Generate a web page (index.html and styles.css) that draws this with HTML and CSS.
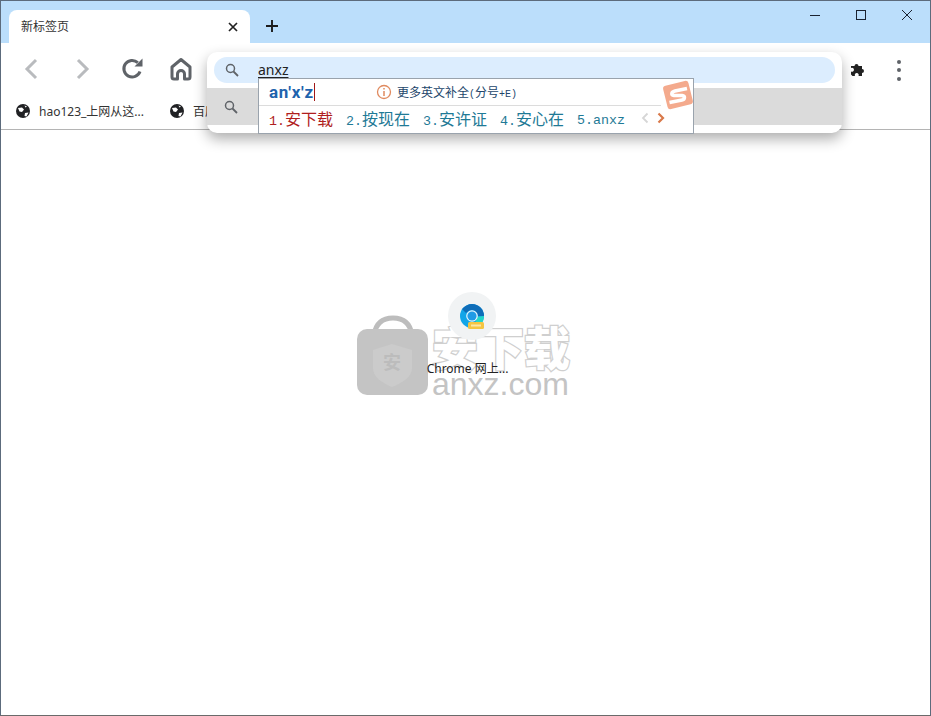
FILE: index.html
```html
<!DOCTYPE html>
<html lang="zh">
<head>
<meta charset="utf-8">
<title>新标签页</title>
<link rel="stylesheet" href="styles.css">
</head>
<body>
<div class="window">
  <header class="titlebar">
    <div class="tab">
      <span class="tab-title">新标签页</span>
      <svg class="tab-close" width="10" height="10" viewBox="0 0 10 10"><path d="M1 1L9 9M9 1L1 9" stroke="#222" stroke-width="1.7" fill="none"/></svg>
    </div>
    <svg class="new-tab" width="14" height="14" viewBox="0 0 14 14"><path d="M7 1V13M1 7H13" stroke="#1c1c1c" stroke-width="1.9" fill="none"/></svg>
    <div class="win-controls">
      <svg width="12" height="12" viewBox="0 0 12 12"><path d="M1 6.5H11" stroke="#1a2230" stroke-width="1" fill="none"/></svg>
      <svg width="12" height="12" viewBox="0 0 12 12"><rect x="1.5" y="1.5" width="9" height="9" stroke="#1a2230" stroke-width="1" fill="none"/></svg>
      <svg width="12" height="12" viewBox="0 0 12 12"><path d="M1 1L11 11M11 1L1 11" stroke="#1a2230" stroke-width="1" fill="none"/></svg>
    </div>
  </header>
  <nav class="toolbar">
    <svg class="back" width="16" height="22" viewBox="0 0 16 22"><path d="M13 2L4 11L13 20" stroke="#b9bbbe" stroke-width="3" fill="none"/></svg>
    <svg class="forward" width="16" height="22" viewBox="0 0 16 22"><path d="M3 2L12 11L3 20" stroke="#b9bbbe" stroke-width="3" fill="none"/></svg>
    <svg class="reload" width="24" height="24" viewBox="0 0 24 24"><path d="M20 14.500A8.300 8.300 0 1 1 17.800 5.600" stroke="#5f6368" stroke-width="3" fill="none"/><path d="M14.500 9.500H22.500V1.500Z" fill="#5f6368"/></svg>
    <svg class="home" width="22" height="24" viewBox="0 0 22 24"><path d="M11 2.500L20 10V20A2 2 0 0 1 18 22H14.500V17A3.500 3.500 0 0 0 7.500 17V22H4A2 2 0 0 1 2 20V10Z" stroke="#5f6368" stroke-width="3" fill="none" stroke-linejoin="round"/></svg>
    <div class="toolbar-spacer"></div>
    <svg class="puzzle" width="16" height="16" viewBox="0 0 16 16"><path d="M1 5H4.500A2 2 0 1 1 8.500 5H12V8A2 2 0 1 1 12 12V15H8.500A2 2 0 1 0 5 15H2.500L1 13.500V10.500A2 2 0 1 0 1 7Z" fill="#222"/></svg>
    <div class="kebab"><i></i><i></i><i></i></div>
  </nav>
  <div class="bookmarks">
    <div class="bookmark hao">
      <svg width="14" height="14" viewBox="0 0 14 14"><circle cx="7" cy="7" r="7" fill="#202124"/><path d="M2 4L6 3.500L8 5.500L6 8L3.500 7.500ZM9 9L12.500 8.500L10.500 12.500L8.500 12Z M8.500 1.500L11 2.500L9.500 3.500Z" fill="#fff"/></svg>
      <span>hao123_上网从这...</span>
    </div>
    <div class="bookmark">
      <svg width="14" height="14" viewBox="0 0 14 14"><circle cx="7" cy="7" r="7" fill="#202124"/><path d="M2 4L6 3.500L8 5.500L6 8L3.500 7.500ZM9 9L12.500 8.500L10.500 12.500L8.500 12Z M8.500 1.500L11 2.500L9.500 3.500Z" fill="#fff"/></svg>
      <span>百度</span>
    </div>
  </div>
  <main class="content">
    <div class="watermark">
      <svg class="wm-bag" width="71" height="81" viewBox="0 0 71 81">
        <path d="M17 20C19 7 27 3 36 3C45 3 53 7 55 20" stroke="#bdbdbd" stroke-width="5" fill="none"/>
        <rect x="0" y="14" width="71" height="66" rx="10" fill="#c4c4c4"/>
        <path d="M35 29L55 35V53C55 62 45 68 35 72C25 68 16 62 16 53V35Z" fill="#cbcbcb"/>
      </svg>
      <span class="wm-bag-char">安</span>
      <div class="wm-text">
        <span class="wm-cn">安下载</span>
        <span class="wm-en">anxz.com</span>
      </div>
    </div>
    <div class="shortcut">
      <div class="shortcut-circle">
        <svg width="26" height="28" viewBox="0 0 26 28">
          <circle cx="13" cy="12" r="12" fill="#12a5e8"/>
          <path d="M13 0A12 12 0 0 1 25 12L19 12C18 8 16 6 13 6C11 6 9 7 7 9L3 5C6 2 9 0 13 0Z" fill="#0f6db8"/>
          <path d="M25 12A12 12 0 0 1 15 24L18 13Z" fill="#22d8c8"/>
          <circle cx="13" cy="12" r="5.800" fill="#eaf7fd"/>
          <circle cx="13" cy="12" r="4.600" fill="#1f9be6"/>
          <rect x="9" y="18" width="16" height="7" rx="1.500" fill="#f5c542"/>
          <rect x="12" y="20.500" width="10" height="2" fill="#fbe7a6"/>
        </svg>
      </div>
      <span class="shortcut-label">Chrome 网上...</span>
    </div>
  </main>
  <div class="omnibox-popup">
    <div class="omni-row">
      <div class="omni-input">
        <svg width="14" height="14" viewBox="0 0 14 14"><circle cx="5.500" cy="5.500" r="4" stroke="#5f6368" stroke-width="1.500" fill="none"/><path d="M8.500 8.500L13 13" stroke="#5f6368" stroke-width="1.800"/></svg>
        <span class="omni-text">anxz</span>
      </div>
    </div>
    <div class="omni-suggest">
      <svg width="14" height="14" viewBox="0 0 14 14"><circle cx="5.500" cy="5.500" r="4" stroke="#5f6368" stroke-width="1.500" fill="none"/><path d="M8.500 8.500L13 13" stroke="#5f6368" stroke-width="1.800"/></svg>
    </div>
  </div>
  <div class="ime">
    <div class="ime-top">
      <span class="ime-pinyin">an'x'z</span><span class="ime-caret"></span>
      <svg class="ime-info" width="16" height="16" viewBox="0 0 16 16"><circle cx="8" cy="8" r="6.500" stroke="#e08a5f" stroke-width="1.300" fill="none"/><path d="M8 4V5.500M8 7V12" stroke="#e08a5f" stroke-width="1.500"/></svg>
      <span class="ime-hint">更多英文补全<span class="half">(</span>分号<span class="half">+E)</span></span>
    </div>
    <div class="ime-bottom">
      <span class="cand first"><span class="num">1.</span>安下载</span>
      <span class="cand"><span class="num">2.</span>按现在</span>
      <span class="cand"><span class="num">3.</span>安许证</span>
      <span class="cand"><span class="num">4.</span>安心在</span>
      <span class="cand"><span class="num">5.anxz</span></span>
      <svg class="ime-prev" width="8" height="12" viewBox="0 0 8 12"><path d="M6.500 1.500L2 6L6.500 10.500" stroke="#d6d6d6" stroke-width="1.800" fill="none"/></svg>
      <svg class="ime-next" width="8" height="12" viewBox="0 0 8 12"><path d="M1.500 1.500L6 6L1.500 10.500" stroke="#d9794a" stroke-width="2.200" fill="none"/></svg>
    </div>
    <svg class="ime-logo" width="34" height="32" viewBox="0 0 34 32"><rect x="4" y="4" width="26" height="24" rx="3" transform="rotate(-14 17 16)" fill="#f4aa8d"/><path d="M26 9.500L14 12C10 13 10 16 13 16.500L21 16.500C24.500 17 24 20.500 21 21L8.500 23.500" stroke="#fff" stroke-width="3.600" fill="none"/></svg>
  </div>
</div>
</body>
</html>
```
FILE: styles.css
```css
* { box-sizing: border-box; }
html, body { margin: 0; padding: 0; height: 100%; background: #fff; }
body { font-family: "Noto Sans", "Noto Sans CJK SC", sans-serif; overflow: hidden; }
svg { display: block; flex: none; }
.window { position: relative; width: 931px; height: 716px; border: 1px solid #5c6b7c; border-bottom-color: #6a6a6a; display: flex; flex-direction: column; overflow: hidden; }
.titlebar { height: 42px; flex: none; background: #bbdefb; display: flex; align-items: flex-end; padding-left: 8px; }
.tab { width: 241px; height: 33px; background: #fff; border-radius: 8px 8px 0 0; display: flex; align-items: center; padding: 0 12px 0 12px; justify-content: space-between; }
.tab-title { font-size: 12px; color: #333; position: relative; top: -1px; }
.new-tab { margin: 0 0 10px 15px; }
.win-controls { margin-left: auto; align-self: flex-start; display: flex; gap: 34px; padding: 8px 17px 0 0; }
.toolbar { height: 52px; flex: none; background: #fff; display: flex; align-items: center; padding: 0 29px 0 22px; }
.forward { margin-left: 36px; }
.reload { margin-left: 29px; }
.home { margin-left: 26px; }
.toolbar-spacer { flex: 1; }
.puzzle { margin-right: 31px; margin-bottom: 1px; }
.kebab { display: flex; flex-direction: column; gap: 4.500px; margin-top: 2px; }
.kebab i { width: 4px; height: 4px; border-radius: 50%; background: #5f6368; display: block; }
.bookmarks { height: 35px; flex: none; background: #fff; border-bottom: 1px solid #b4b4b4; display: flex; align-items: center; padding: 0 0 3px 15px; font-size: 12px; color: #333; }
.bookmark { display: flex; align-items: center; gap: 9px; }
.bookmark.hao { width: 154px; }
.content { flex: 1; position: relative; background: #fff; }
.shortcut { position: absolute; left: 416px; top: 162px; width: 110px; display: flex; flex-direction: column; align-items: center; }
.shortcut-circle { width: 48px; height: 48px; border-radius: 50%; background: #f1f3f4; display: flex; align-items: center; justify-content: center; padding-top: 3px; }
.shortcut-label { font-size: 12px; line-height: 16px; color: #222; margin-top: 21px; margin-left: -9px; white-space: nowrap; }
.watermark { position: absolute; left: 356px; top: 185px; width: 220px; height: 85px; display: flex; }
.wm-bag-char { position: absolute; left: 26px; top: 34px; font-size: 18px; font-weight: 700; line-height: 26px; color: #bcbcbc; }
.wm-text { position: absolute; left: 75px; top: 5px; display: flex; flex-direction: column; }
.wm-cn { font-size: 46px; line-height: 54px; font-weight: 900; white-space: nowrap; color: #fff; -webkit-text-stroke: 2.500px #cfcfcf; paint-order: stroke fill; }
.wm-en { font-family: "Liberation Sans", sans-serif; font-size: 32px; line-height: 30px; margin-top: -5px; color: #c4c4c4; }
.omnibox-popup { position: absolute; left: 206px; top: 51px; width: 635px; height: 81px; background: #fff; border-radius: 10px; box-shadow: 0 6px 14px rgba(0,0,0,.32); display: flex; flex-direction: column; }
.omni-row { padding: 5px 7px 5px 7px; }
.omni-input { height: 26px; background: #dcedfe; border-radius: 13px; display: flex; align-items: center; padding-left: 11px; }
.omni-text { font-size: 14px; color: #222; margin-left: 19px; text-decoration: underline; text-decoration-thickness: 1px; text-underline-offset: 2px; position: relative; top: -1px; }
.omni-suggest { height: 37px; background: #dbdbdb; display: flex; align-items: center; padding-left: 17px; }
.ime { position: absolute; left: 257px; top: 77px; width: 436px; height: 56px; background: #fff; border: 1px solid #9aa3ad; }
.ime-top { height: 27px; margin-right: 32px; border-bottom: 1px solid #dcdcdc; display: flex; align-items: center; padding-left: 10px; position: relative; }
.ime-pinyin { font-family: Roboto, "Liberation Sans", sans-serif; font-size: 17px; font-weight: 700; letter-spacing: 0.700px; color: #1e63ad; }
.ime-caret { width: 1px; height: 18px; background: #a01818; }
.ime-info { margin-left: 61px; }
.ime-hint { font-size: 12px; color: #23466b; margin-left: 5px; white-space: nowrap; }
.half { font-family: "Liberation Mono", monospace; font-size: 10px; }
.ime-bottom { height: 27px; padding: 0 0 4px 10px; display: flex; align-items: center; gap: 13px; font-size: 16px; color: #1f7a96; white-space: nowrap; }
.num { font-family: "Liberation Mono", monospace; font-size: 13.330px; }
.cand.first { color: #b01e1e; }
.ime-prev { margin-left: 3px; }
.ime-next { margin-left: -5px; }
.ime-logo { position: absolute; right: -2px; top: 0; }
```
